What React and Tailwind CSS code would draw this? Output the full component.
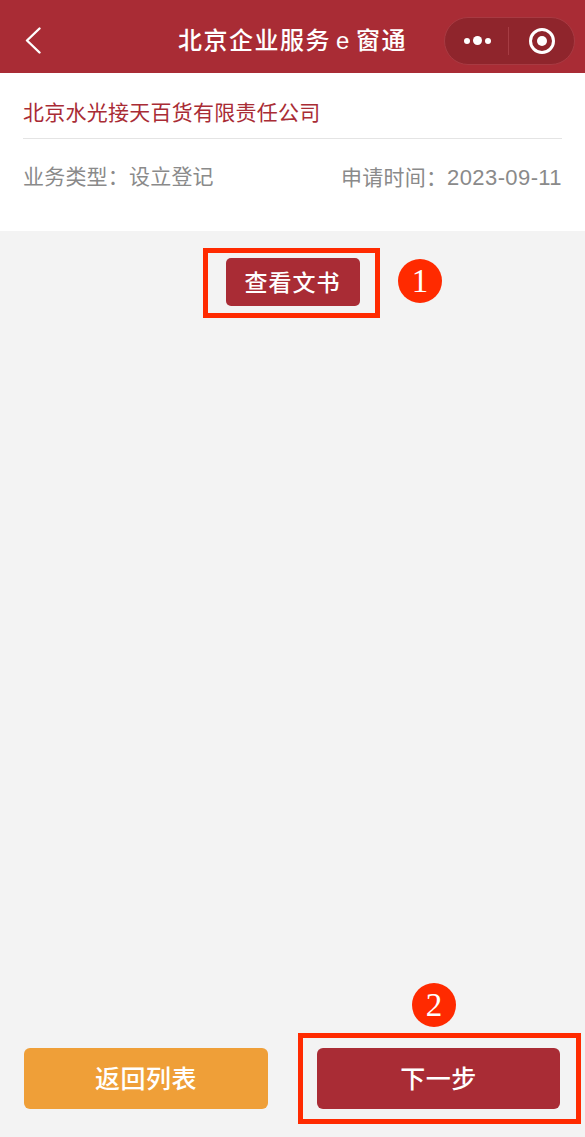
const sans = { fontFamily: '"Liberation Sans", "Noto Sans CJK SC", sans-serif' };

function BackIcon() {
  return (
    <svg width="16" height="27" viewBox="0 0 16 27" fill="none" stroke="white" strokeWidth="2.4" strokeLinecap="round" strokeLinejoin="round">
      <path d="M14.5 1.5 2 13.5l12.5 12" />
    </svg>
  );
}

function Capsule() {
  return (
    <div className="flex items-center w-[131px] h-[48px] rounded-full bg-[#8f252c] border border-[#a83a42]">
      <div className="flex flex-1 items-center justify-center gap-[3px] pl-[1px]">
        <span className="w-[6px] h-[6px] rounded-full bg-white" />
        <span className="w-[9px] h-[9px] rounded-full bg-white" />
        <span className="w-[6px] h-[6px] rounded-full bg-white" />
      </div>
      <div className="w-px h-[28px] bg-[#a63c43]" />
      <div className="flex w-[65px] items-center justify-center">
        <div className="flex items-center justify-center w-[26px] h-[26px] rounded-full border-[3px] border-white">
          <span className="w-[10px] h-[10px] rounded-full bg-white" />
        </div>
      </div>
    </div>
  );
}

function Marker({ className, children }) {
  return (
    <div
      className={`absolute flex items-center justify-center w-[44px] h-[44px] rounded-full bg-[#ff2a00] text-white text-[33px] leading-none ${className}`}
      style={{ fontFamily: '"Liberation Serif", serif' }}
    >
      {children}
    </div>
  );
}

export default function App() {
  return (
    <div className="relative flex flex-col w-[585px] h-[1137px] overflow-hidden bg-[#f3f3f3]" style={sans}>
      <header className="relative flex items-center justify-between h-[73px] pt-[8px] pl-[25px] pr-[10px] bg-[#a92c35] text-white">
        <BackIcon />
        <h1 className="absolute left-0 right-0 top-[24px] text-center text-[24px] leading-[34px] font-medium tracking-[1.5px]">
          北京企业服务<span className="mx-[5px]">e</span>窗通
        </h1>
        <Capsule />
      </header>

      <section className="h-[158px] px-[23px] bg-white">
        <div className="flex items-center h-[66px] pt-[15px] border-b border-[#e4e4e4] text-[21px] tracking-[0.25px] text-[#a92c35]">
          北京水光接天百货有限责任公司
        </div>
        <div className="flex items-center justify-between h-[78px] pb-[2px] text-[21px] text-[#8a8a8a]">
          <span className="tracking-[0.2px]">业务类型：设立登记</span>
          <span className="tracking-[0.2px]">
            申请时间：<span className="text-[22px] tracking-[0.4px]">2023-09-11</span>
          </span>
        </div>
      </section>

      <main className="flex flex-1 justify-center pt-[27px]">
        <button className="w-[134px] h-[48px] pt-[2px] rounded-[5px] bg-[#a92c35] text-white text-[23px] font-medium tracking-[1px]">
          查看文书
        </button>
      </main>

      <footer className="flex gap-[49px] pl-[24px] pb-[28px]">
        <button className="w-[244px] h-[61px] pt-[3px] rounded-[6px] bg-[#ef9f38] text-white text-[25px] font-medium tracking-[0.5px]">返回列表</button>
        <button className="w-[243px] h-[61px] pt-[3px] rounded-[6px] bg-[#a92c35] text-white text-[25px] font-medium tracking-[0.5px]">下一步</button>
      </footer>

      {/* red annotations on top of the screenshot */}
      <div className="absolute left-[203px] top-[248px] w-[177px] h-[70px] border-[5px] border-[#ff2a00]" />
      <Marker className="left-[398px] top-[259px]">1</Marker>
      <div className="absolute left-[298px] top-[1033px] w-[283px] h-[91px] border-[5px] border-[#ff2a00]" />
      <Marker className="left-[412px] top-[983px]">2</Marker>
    </div>
  );
}
